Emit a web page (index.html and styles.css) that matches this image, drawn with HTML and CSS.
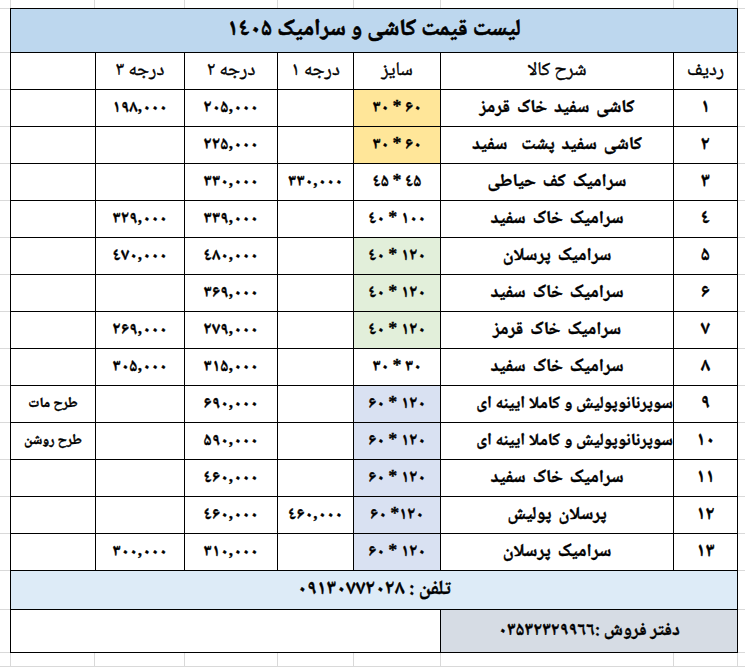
FILE: index.html
```html
<!DOCTYPE html>
<html lang="fa">
<head>
<meta charset="utf-8">
<title>لیست قیمت کاشی و سرامیک</title>
<link rel="stylesheet" href="styles.css">
</head>
<body>
<div class="sheet" dir="rtl">
  <div class="cell title span-all">لیست قیمت کاشی و سرامیک ۱٤۰۵</div>

  <div class="cell head">ردیف</div>
  <div class="cell head">شرح کالا</div>
  <div class="cell head">سایز</div>
  <div class="cell head">درجه ۱</div>
  <div class="cell head">درجه ۲</div>
  <div class="cell head">درجه ۳</div>
  <div class="cell head"></div>

  <div class="cell num">۱</div><div class="cell desc">کاشی سفید خاک قرمز</div><div class="cell size yellow">۶۰ * ۳۰</div><div class="cell price"></div><div class="cell price">۲۰۵,۰۰۰</div><div class="cell price">۱۹۸,۰۰۰</div><div class="cell"></div>
  <div class="cell num">۲</div><div class="cell desc">کاشی سفید پشت&nbsp; سفید</div><div class="cell size yellow">۶۰ * ۳۰</div><div class="cell price"></div><div class="cell price">۲۲۵,۰۰۰</div><div class="cell price"></div><div class="cell"></div>
  <div class="cell num">۳</div><div class="cell desc">سرامیک کف حیاطی</div><div class="cell size">٤۵ * ٤۵</div><div class="cell price">۳۳۰,۰۰۰</div><div class="cell price">۳۳۰,۰۰۰</div><div class="cell price"></div><div class="cell"></div>
  <div class="cell num">٤</div><div class="cell desc">سرامیک خاک سفید</div><div class="cell size">۱۰۰ * ٤۰</div><div class="cell price"></div><div class="cell price">۳۳۹,۰۰۰</div><div class="cell price">۳۲۹,۰۰۰</div><div class="cell"></div>
  <div class="cell num">۵</div><div class="cell desc">سرامیک پرسلان</div><div class="cell size green">۱۲۰ * ٤۰</div><div class="cell price"></div><div class="cell price">٤۸۰,۰۰۰</div><div class="cell price">٤۷۰,۰۰۰</div><div class="cell"></div>
  <div class="cell num">۶</div><div class="cell desc">سرامیک خاک سفید</div><div class="cell size green">۱۲۰ * ٤۰</div><div class="cell price"></div><div class="cell price">۳۶۹,۰۰۰</div><div class="cell price"></div><div class="cell"></div>
  <div class="cell num">۷</div><div class="cell desc">سرامیک خاک قرمز</div><div class="cell size green">۱۲۰ * ٤۰</div><div class="cell price"></div><div class="cell price">۲۷۹,۰۰۰</div><div class="cell price">۲۶۹,۰۰۰</div><div class="cell"></div>
  <div class="cell num">۸</div><div class="cell desc">سرامیک خاک سفید</div><div class="cell size">۳۰ * ۳۰</div><div class="cell price"></div><div class="cell price">۳۱۵,۰۰۰</div><div class="cell price">۳۰۵,۰۰۰</div><div class="cell"></div>
  <div class="cell num">۹</div><div class="cell wide">سوپرنانوپولیش و کاملا ایینه ای</div><div class="cell size lav">۱۲۰ * ۶۰</div><div class="cell price"></div><div class="cell price">۶۹۰,۰۰۰</div><div class="cell price"></div><div class="cell note">طرح مات</div>
  <div class="cell num">۱۰</div><div class="cell wide">سوپرنانوپولیش و کاملا ایینه ای</div><div class="cell size lav">۱۲۰ * ۶۰</div><div class="cell price"></div><div class="cell price">۵۹۰,۰۰۰</div><div class="cell price"></div><div class="cell note">طرح روشن</div>
  <div class="cell num">۱۱</div><div class="cell desc">سرامیک خاک سفید</div><div class="cell size lav">۱۲۰ * ۶۰</div><div class="cell price"></div><div class="cell price">٤۶۰,۰۰۰</div><div class="cell price"></div><div class="cell"></div>
  <div class="cell num">۱۲</div><div class="cell desc">پرسلان پولیش</div><div class="cell size lav">۱۲۰* ۶۰</div><div class="cell price">٤۶۰,۰۰۰</div><div class="cell price">٤۶۰,۰۰۰</div><div class="cell price"></div><div class="cell"></div>
  <div class="cell num">۱۳</div><div class="cell desc">سرامیک پرسلان</div><div class="cell size lav">۱۲۰ * ۶۰</div><div class="cell price"></div><div class="cell price">۳۱۰,۰۰۰</div><div class="cell price">۳۰۰,۰۰۰</div><div class="cell"></div>

  <div class="cell phone span-all">تلفن : ۰۹۱۳۰۷۷۲۰۲۸</div>

  <div class="cell office">دفتر فروش :۰۳۵۳۲۳۲۹۹٦٦</div>
  <div class="cell blank"></div>
</div>
</body>
</html>
```

FILE: styles.css
```css
html, body {
  margin: 0;
  padding: 0;
}

body {
  width: 745px;
  height: 667px;
  overflow: hidden;
  background-color: #ffffff;
  --g: #d9d9d9;
  background-image:
    linear-gradient(var(--g), var(--g)),
    linear-gradient(var(--g), var(--g)),
    linear-gradient(var(--g), var(--g)),
    linear-gradient(var(--g), var(--g)),
    linear-gradient(var(--g), var(--g)),
    linear-gradient(var(--g), var(--g)),
    linear-gradient(var(--g), var(--g)),
    linear-gradient(var(--g), var(--g)),
    linear-gradient(var(--g), var(--g)),
    linear-gradient(var(--g), var(--g)),
    repeating-linear-gradient(to bottom, var(--g) 0 1px, transparent 1px 37px),
    linear-gradient(var(--g), var(--g)),
    linear-gradient(var(--g), var(--g)),
    linear-gradient(var(--g), var(--g));
  background-repeat: no-repeat;
  background-size:
    1px 100%, 1px 100%, 1px 100%, 1px 100%, 1px 100%, 1px 100%, 1px 100%, 1px 100%,
    100% 1px, 100% 1px,
    100% 482px,
    100% 1px, 100% 1px, 100% 1px;
  background-position:
    10px 0, 94px 0, 184px 0, 277px 0, 353px 0, 440px 0, 673px 0, 737px 0,
    0 8px, 0 52px,
    0 89px,
    0 609px, 0 652px, 0 666px;
  font-family: "Noto Naskh Arabic", "Noto Sans Arabic", "DejaVu Sans", sans-serif;
}

.sheet {
  direction: rtl;
  display: grid;
  grid-template-columns: 63px 232px 86px 75px 92px 88px 84px;
  grid-template-rows: 43px 36px repeat(13, 36px) 38px 42px;
  gap: 1px;
  padding: 1px;
  background: #000000;
  width: max-content;
  margin: 8px 0 0 10px;
}

.cell {
  background: #ffffff;
  display: flex;
  align-items: center;
  justify-content: center;
  font-weight: bold;
  font-size: 16px;
  color: #000000;
  white-space: nowrap;
  overflow: hidden;
  line-height: 1;
  -webkit-text-stroke: 0.35px #000;
}

.span-all {
  grid-column: 1 / -1;
}

.title {
  background: #bdd7ee;
  font-size: 23px;
  -webkit-text-stroke: 0.6px #000;
}

.head {
  font-size: 19px;
  font-weight: normal;
  -webkit-text-stroke: 0.4px #000;
}

.num {
  font-size: 19px;
}

.desc {
  font-size: 18px;
  word-spacing: 3px;
}

.wide {
  justify-content: flex-start;
  font-size: 17px;
  letter-spacing: -0.2px;
}

.price {
  font-size: 17px;
}

.size {
  font-size: 17px;
}

.yellow {
  background: #ffe699;
}

.green {
  background: #e2efda;
}

.lav {
  background: #d9e1f2;
}

.note {
  font-size: 14px;
}

.phone {
  background: #ddebf7;
  font-size: 20px;
}

.office {
  grid-column: 1 / 3;
  background: #d6dce4;
  font-size: 18px;
}

.blank {
  grid-column: 3 / -1;
}
```
